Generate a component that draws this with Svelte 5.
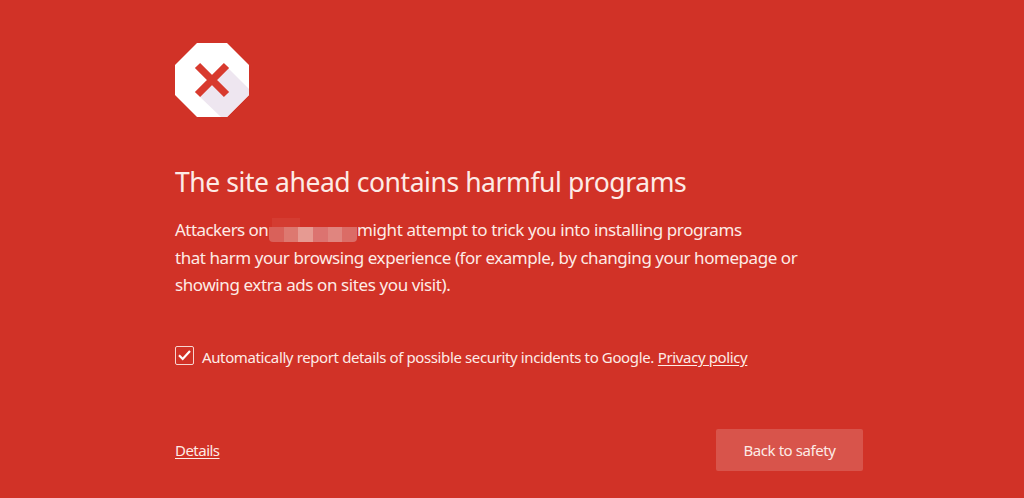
<script lang="ts">
  let report = $state(true);
  const blocks = ["#d9615a", "#dd7870", "#e69a92", "#dc7370", "#e0857f", "#db6c66"];
</script>

<main class="page">
  <div class="interstitial">
    <svg class="icon" viewBox="0 0 74 74" aria-hidden="true">
      <path d="M22 0H52L74 22V52L52 74H22L0 52V22Z" fill="#fff" />
      <path d="M53 25L74 46V52L52 74H46L24 53L37 37Z" fill="#eee6f0" />
      <path d="M22.5 22.5L51.5 51.5M51.5 22.5L22.5 51.5" stroke="#d83a2e" stroke-width="7.4" />
    </svg>

    <h1>The site ahead contains harmful programs</h1>

    <div class="message">
      <p class="first">
        <span class="start">Attackers on</span>
        <span class="redacted">
          {#each blocks as color}
            <i style:background={color}></i>
          {/each}
        </span>
        <span>might attempt to trick you into installing programs</span>
      </p>
      <p class="second">that harm your browsing experience (for example, by changing your homepage or</p>
      <p>showing extra ads on sites you visit).</p>
    </div>

    <div class="opt-in">
      <button class="checkbox" role="checkbox" aria-checked={report} aria-label="Report details" onclick={() => (report = !report)}>
        {#if report}
          <svg viewBox="0 0 15 15"><path d="M2 7.2L5.7 11L13 3" fill="none" stroke="#fff" stroke-width="2.2" /></svg>
        {/if}
      </button>
      <span>Automatically report details of possible security incidents to Google.</span>
      <a class="privacy" href="#privacy">Privacy policy</a>
    </div>

    <div class="actions">
      <a class="details" href="#details">Details</a>
      <button class="primary">Back to safety</button>
    </div>
  </div>
</main>

<style>
  :global(body) {
    background: #d13227;
  }

  .page {
    height: 498px;
    overflow: hidden;
    background: #d13227;
    color: #fdebe6;
    font-family: "Segoe UI", "Noto Sans", "Open Sans", sans-serif;
    white-space: nowrap;
  }

  .interstitial {
    width: 688px;
    margin-left: 175px;
    padding-top: 43px;
  }

  .icon {
    display: block;
    width: 74px;
    height: 74px;
  }

  h1 {
    margin: 45px 0 0;
    font-size: 26.5px;
    font-weight: 400;
    line-height: 40px;
    letter-spacing: -0.43px;
  }

  .message {
    margin-top: 14px;
    font-size: 17px;
    line-height: 27.7px;
  }

  p {
    margin: 0;
    letter-spacing: -0.4px;
  }

  .first {
    display: flex;
  }

  .start {
    width: 94px;
    letter-spacing: -0.55px;
  }

  .second {
    letter-spacing: -0.44px;
  }

  .redacted {
    position: relative;
    display: flex;
    width: 88px;
    height: 15px;
    margin-top: 11px;
  }

  .redacted::before {
    content: "";
    position: absolute;
    left: 3px;
    top: -9px;
    width: 28px;
    height: 9px;
    background: #d43c31;
  }

  .redacted i {
    flex: 1;
  }

  .redacted i:first-child {
    border-radius: 0 0 0 4px;
  }

  .redacted i:last-child {
    border-radius: 0 0 4px 0;
  }

  .opt-in {
    display: flex;
    align-items: center;
    height: 24px;
    margin-top: 46px;
    font-size: 15px;
    letter-spacing: -0.38px;
  }

  .checkbox {
    box-sizing: border-box;
    width: 19px;
    height: 19px;
    margin: 0 8px 4px 0;
    padding: 1px;
    border: 1px solid #f8d5d0;
    border-radius: 2px;
    background: none;
  }

  .checkbox svg {
    display: block;
    width: 15px;
    height: 15px;
  }

  a {
    color: inherit;
    text-underline-offset: 2px;
  }

  .privacy {
    margin-left: 4px;
  }

  .actions {
    display: flex;
    align-items: center;
    justify-content: space-between;
    margin-top: 60px;
    font-size: 15px;
    letter-spacing: -0.42px;
  }

  .details {
    letter-spacing: -0.52px;
  }

  .primary {
    width: 147px;
    height: 42px;
    padding: 0;
    border: 0;
    border-radius: 2px;
    background: #d8544b;
    color: inherit;
    font: inherit;
    letter-spacing: inherit;
  }
</style>
